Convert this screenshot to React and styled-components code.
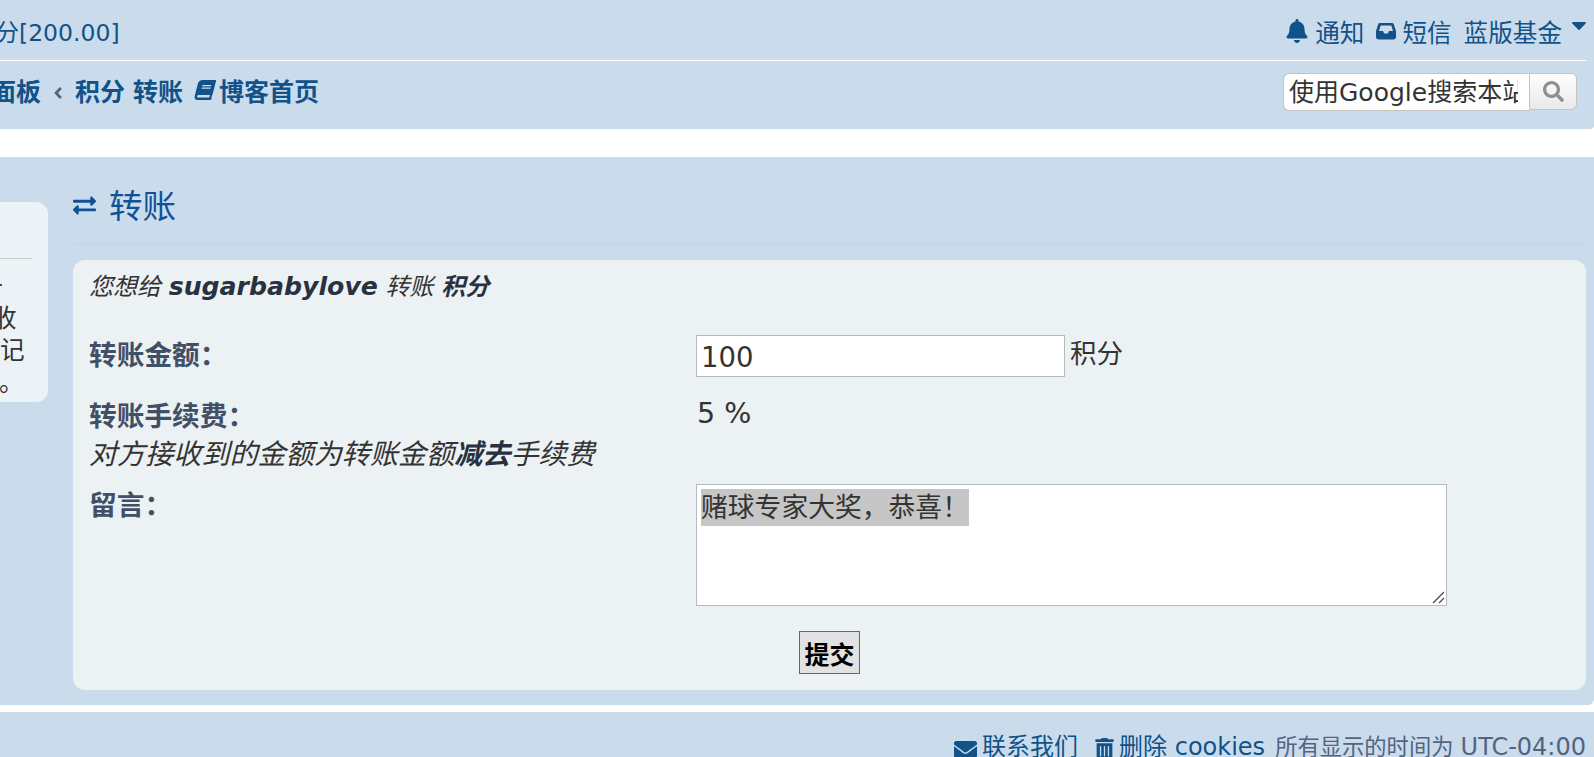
import React from 'react';
import styled, { createGlobalStyle } from 'styled-components';
import { FaBell, FaCaretDown, FaBook, FaSearch, FaExchangeAlt, FaEnvelope, FaTrashAlt, FaAngleLeft } from 'react-icons/fa';

const fontStack = '"DejaVu Sans", "Noto Sans CJK SC", sans-serif';

const Global = createGlobalStyle`
  html, body {
    margin: 0;
    padding: 0;
    background: #fff;
    overflow: hidden;
    height: 757px;
  }
  body {
    font-family: ${fontStack};
    color: #333;
  }
  * { box-sizing: border-box; }
  a { color: #105289; text-decoration: none; }
`;

const Page = styled.div`
  width: 1594px;
  height: 757px;
  overflow: hidden;
`;

const HeaderBand = styled.header`
  height: 129px;
  background: #cadceb;
  padding-right: 8px;
  margin-bottom: 28px;
  border-bottom-right-radius: 4px;
`;

const TopRow = styled.div`
  height: 61px;
  display: flex;
  justify-content: space-between;
  align-items: center;
  border-bottom: 1px solid #fff;
  padding-top: 2px;
  font-size: 24.6px;
  color: #105289;
`;

const Credit = styled.a`
  margin-left: -28px;
  font-size: 23.5px;
  white-space: nowrap;
`;

const UserMenu = styled.div`
  display: flex;
  align-items: center;
  gap: 12px;
`;

const MenuLink = styled.a`
  display: flex;
  align-items: center;
  gap: ${p => p.$gap || 6}px;
  white-space: nowrap;
  svg { font-size: ${p => p.$icon || 24}px; }
`;

const Caret = styled(FaCaretDown)`
  font-size: 24px;
  margin: -12px -5px 0 -7px;
  color: #105289;
`;

const NavRow = styled.div`
  height: 68px;
  display: flex;
  justify-content: space-between;
  align-items: center;
  padding: 0 9px 6px 0;
`;

const Breadcrumbs = styled.nav`
  display: flex;
  align-items: center;
  font-size: 25px;
  font-weight: 700;
  margin: 0 0 4px -9px;
  white-space: nowrap;
`;

const Crumb = styled.a`
  display: flex;
  align-items: center;
  gap: 4px;
  margin-left: ${p => p.$gap || 0}px;
`;

const CrumbSep = styled(FaAngleLeft)`
  font-size: 18px;
  color: #536482;
  margin: 5px 0 0 8px;
`;

const BookIcon = styled(FaBook)`
  font-size: 20px;
  transform: skewX(-14deg);
`;

const SearchBox = styled.form`
  display: flex;
  height: 38px;
`;

const SearchInput = styled.input`
  width: 246px;
  height: 38px;
  border: 1px solid #c7c3bf;
  border-right: 0;
  border-radius: 6px 0 0 6px;
  background: #fff;
  padding: 0 11px 0 5px;
  font: 25px ${fontStack};
  color: #333;
  outline: none;
  &::placeholder { color: #333; opacity: 1; }
`;

const SearchButton = styled.button`
  width: 48px;
  height: 37px;
  border: 1px solid #c7c3bf;
  border-radius: 0 6px 6px 0;
  background: linear-gradient(#fff, #e9e9e9);
  color: #8f8f8f;
  font-size: 21px;
  display: flex;
  align-items: center;
  justify-content: center;
  padding: 0;
`;

const ContentBand = styled.main`
  height: 548px;
  background: #cadceb;
  border-radius: 0 0 6px 0;
  margin-bottom: 7px;
  padding-right: 8px;
  display: flex;
`;

const Sidebar = styled.aside`
  flex: 0 0 48px;
  height: 200px;
  margin: 45px 25px 0 0;
  background: #ecf3f7;
  border-radius: 0 12px 12px 0;
  overflow: hidden;
`;

const SideRule = styled.div`
  margin-top: 56px;
  height: 1px;
  width: 32px;
  background: #c9c9c9;
`;

const SideMark = styled.div`
  margin-top: 25px;
  width: 2px;
  height: 2px;
  background: #105289;
`;

const SideText = styled.div`
  margin-top: 17px;
  font-size: 24.6px;
  line-height: 32px;
  display: flex;
  flex-direction: column;
  align-items: flex-start;
`;

const SideLine = styled.span`
  white-space: nowrap;
  margin-left: ${p => p.$x}px;
`;

const Main = styled.section`
  flex: 1;
  min-width: 0;
`;

const Title = styled.h2`
  margin: 0;
  height: 87px;
  border-bottom: 1px solid #c5d4e0;
  display: flex;
  align-items: center;
  gap: 13px;
  font-size: 33.5px;
  font-weight: 400;
  color: #115098;
  padding-top: 7px;
  svg { font-size: 23px; margin-top: 4px; }
`;

const Panel = styled.div`
  margin-top: 16px;
  height: 430px;
  background: #ecf1f4;
  border-radius: 12px;
  padding: 12px 16px;
`;

const Intro = styled.p`
  margin: 0 0 33px;
  font-size: 24px;
  line-height: 30px;
  font-style: italic;
  strong { color: #28313f; }
`;

const Name = styled.strong`
  font-size: 25.2px;
`;

const Row = styled.div`
  display: grid;
  grid-template-columns: 607px 1fr;
  min-height: ${p => p.$h}px;
`;

const Label = styled.div`
  font-size: 27.7px;
  line-height: 37px;
  padding-top: ${p => p.$top || 3}px;
  strong { color: #425067; font-weight: 700; }
  em { display: block; font-size: 28.1px; line-height: 40px; color: #333; }
  em b { color: #28313f; }
`;

const Value = styled.div`
  font-size: ${p => p.$size || 26.5}px;
  line-height: 37px;
  padding-left: ${p => p.$left || 0}px;
  display: flex;
  align-items: flex-start;
  gap: 5px;
`;

const Amount = styled.input`
  width: 369px;
  height: 42px;
  border: 1px solid #b4bac0;
  background: #fff;
  padding: 5px 4px 3px;
  font: 27.5px ${fontStack};
  color: #333;
  outline: none;
`;

const MessageBox = styled.div`
  position: relative;
  width: 751px;
  height: 122px;
  border: 1px solid #b4bac0;
  background: #fff;
  padding: 4px 4px;
`;

const Selected = styled.span`
  display: inline-block;
  font-size: 26.8px;
  line-height: 37px;
  color: #333;
  background: #c6c6c6;
  height: 37px;
`;

const Grip = styled.svg`
  position: absolute;
  right: 1px;
  bottom: 1px;
  width: 13px;
  height: 13px;
`;

const SubmitRow = styled.div`
  padding: 25px 0 0 710px;
`;

const Submit = styled.button`
  width: 61px;
  height: 43px;
  border: 1px solid #666;
  background: #e2e2e2;
  color: #000;
  font: 700 25px ${fontStack};
  padding: 0;
`;

const FooterBand = styled.footer`
  height: 60px;
  background: #cadceb;
  padding: 20px 8px 0 0;
  display: flex;
  justify-content: flex-end;
  align-items: flex-start;
  font-size: 24px;
  line-height: 30px;
  white-space: nowrap;
`;

const FootLink = styled.a`
  display: flex;
  align-items: center;
  gap: ${p => p.$gap}px;
  margin-right: ${p => p.$after}px;
  svg { font-size: ${p => p.$icon}px; margin-top: ${p => p.$drop}px; }
`;

const FootNote = styled.span`
  color: #536482;
  font-size: 22.3px;
`;

const Zone = styled.span`
  font-size: 24px;
`;

function InboxIcon() {
  return (
    <svg width="20" height="18" viewBox="0 0 20 18">
      <path
        fill="currentColor"
        fillRule="evenodd"
        d="M4 1h12c.8 0 1.4.4 1.7 1.1L20 9v6c0 1.4-1.1 2.5-2.5 2.5h-15C1.1 17.500 0 16.400 0 15V9l2.300-6.900C2.600 1.400 3.200 1 4 1zM4.700 3.500 3 9h4l1.200 2.500h3.600L13 9h4l-1.700-5.500z"
      />
    </svg>
  );
}

export default function App() {
  return (
    <Page>
      <Global />
      <HeaderBand>
        <TopRow>
          <Credit href="#">积分[200.00]</Credit>
          <UserMenu>
            <MenuLink href="#"><FaBell />通知</MenuLink>
            <MenuLink href="#"><InboxIcon />短信</MenuLink>
            <MenuLink href="#">蓝版基金</MenuLink>
            <Caret />
          </UserMenu>
        </TopRow>
        <NavRow>
          <Breadcrumbs>
            <Crumb href="#">面板</Crumb>
            <CrumbSep />
            <Crumb href="#" $gap={8}>积分</Crumb>
            <Crumb href="#" $gap={8}>转账</Crumb>
            <Crumb href="#" $gap={12}><BookIcon />博客首页</Crumb>
          </Breadcrumbs>
          <SearchBox>
            <SearchInput placeholder="使用Google搜索本站" />
            <SearchButton type="button"><FaSearch /></SearchButton>
          </SearchBox>
        </NavRow>
      </HeaderBand>

      <ContentBand>
        <Sidebar>
          <SideRule />
          <SideMark />
          <SideText>
            <SideLine $x={-8}>收</SideLine>
            <SideLine $x={0}>记</SideLine>
            <SideLine $x={-1}>。</SideLine>
          </SideText>
        </Sidebar>
        <Main>
          <Title><FaExchangeAlt />转账</Title>
          <Panel>
            <Intro>您想给 <Name>sugarbabylove</Name> 转账 <strong>积分</strong></Intro>
            <Row $h={60}>
              <Label $top={2}><strong>转账金额：</strong></Label>
              <Value><Amount defaultValue="100" />积分</Value>
            </Row>
            <Row $h={89}>
              <Label>
                <strong>转账手续费：</strong>
                <em>对方接收到的金额为转账金额<b>减去</b>手续费</em>
              </Label>
              <Value $size={28.5} $left={1}>5 %</Value>
            </Row>
            <Row $h={122}>
              <Label $top={3}><strong>留言：</strong></Label>
              <MessageBox>
                <Selected>赌球专家大奖，恭喜！</Selected>
                <Grip viewBox="0 0 13 13">
                  <path d="M1 12 L12 1 M7 12 L12 7" stroke="#444" strokeWidth="1.2" fill="none" />
                </Grip>
              </MessageBox>
            </Row>
            <SubmitRow><Submit type="button">提交</Submit></SubmitRow>
          </Panel>
        </Main>
      </ContentBand>

      <FooterBand>
        <FootLink href="#" $icon={23} $gap={5} $after={16} $drop={5}><FaEnvelope />联系我们</FootLink>
        <FootLink href="#" $icon={21} $gap={4} $after={10} $drop={3}><FaTrashAlt />删除 cookies</FootLink>
        <FootNote>所有显示的时间为 <Zone>UTC-04:00</Zone></FootNote>
      </FooterBand>
    </Page>
  );
}
